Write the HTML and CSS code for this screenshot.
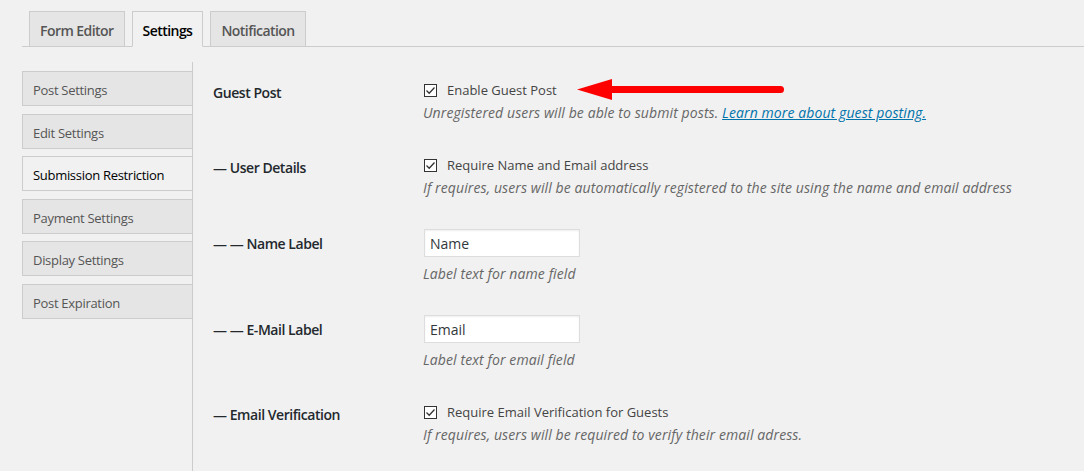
FILE: index.html
```html
<!DOCTYPE html>
<html lang="en">
<head>
  <meta charset="UTF-8">
  <title>Settings</title>
  <link rel="stylesheet" href="styles.css">
</head>
<body>
<div class="wrap">
  <div class="nav-tabs">
    <a href="#" class="nav-tab">Form Editor</a>
    <a href="#" class="nav-tab active">Settings</a>
    <a href="#" class="nav-tab">Notification</a>
  </div>

  <div class="settings">
    <ul class="side-menu">
      <li><a href="#">Post Settings</a></li>
      <li><a href="#">Edit Settings</a></li>
      <li class="active"><a href="#">Submission Restriction</a></li>
      <li><a href="#">Payment Settings</a></li>
      <li><a href="#">Display Settings</a></li>
      <li><a href="#">Post Expiration</a></li>
    </ul>

    <div class="panel">
      <div class="row">
        <div class="row-label">Guest Post</div>
        <div class="row-field">
          <label class="check">
            <span class="box"><svg width="11" height="11" viewBox="0 0 11 11"><path d="M1.5 5.5 L4.2 8.2 L9.5 2.5" fill="none" stroke="#333" stroke-width="1.3"/></svg></span>
            Enable Guest Post
          </label>
          <p class="description">Unregistered users will be able to submit posts. <a href="#">Learn more about guest posting.</a></p>
        </div>
      </div>

      <div class="row">
        <div class="row-label">&mdash; User Details</div>
        <div class="row-field">
          <label class="check">
            <span class="box"><svg width="11" height="11" viewBox="0 0 11 11"><path d="M1.5 5.5 L4.2 8.2 L9.5 2.5" fill="none" stroke="#333" stroke-width="1.3"/></svg></span>
            Require Name and Email address
          </label>
          <p class="description">If requires, users will be automatically registered to the site using the name and email address</p>
        </div>
      </div>

      <div class="row row-input">
        <div class="row-label">&mdash; &mdash; Name Label</div>
        <div class="row-field">
          <input type="text" class="text-input" value="Name">
          <p class="description">Label text for name field</p>
        </div>
      </div>

      <div class="row row-input">
        <div class="row-label">&mdash; &mdash; E-Mail Label</div>
        <div class="row-field">
          <input type="text" class="text-input" value="Email">
          <p class="description">Label text for email field</p>
        </div>
      </div>

      <div class="row">
        <div class="row-label">&mdash; Email Verification</div>
        <div class="row-field">
          <label class="check">
            <span class="box"><svg width="11" height="11" viewBox="0 0 11 11"><path d="M1.5 5.5 L4.2 8.2 L9.5 2.5" fill="none" stroke="#333" stroke-width="1.3"/></svg></span>
            Require Email Verification for Guests
          </label>
          <p class="description">If requires, users will be required to verify their email adress.</p>
        </div>
      </div>
    </div>
  </div>

  <!-- annotation arrow -->
  <svg class="arrow" width="220" height="32" viewBox="0 0 220 32">
    <line x1="40" y1="15.5" x2="210.5" y2="15.5" stroke="#ff0000" stroke-width="7" stroke-linecap="round"/>
    <polygon points="7,15.5 42,5 42,26" fill="#ff0000"/>
  </svg>
</div>
</body>
</html>
```

FILE: styles.css
```css
* {
  margin: 0;
  padding: 0;
  box-sizing: border-box;
}

body {
  background: #f1f1f1;
  font-family: "Open Sans", "Noto Sans", sans-serif;
  font-size: 13px;
  color: #444;
  height: 471px;
  overflow: hidden;
}

a {
  text-decoration: none;
}

.wrap {
  position: relative;
  padding-top: 11px;
}

.nav-tabs {
  display: flex;
  align-items: flex-end;
  margin-left: 22px;
  border-bottom: 1px solid #ccc;
}

.nav-tab {
  margin-left: 7px;
  padding: 7px 10px 3px;
  line-height: 24px;
  font-size: 14px;
  font-weight: 600;
  letter-spacing: -0.55px;
  color: #555;
  background: #e5e5e5;
  border: 1px solid #ccc;
  border-bottom: none;
}

.nav-tab.active {
  color: #000;
  background: #f1f1f1;
  border-bottom: 1px solid #f1f1f1;
  margin-bottom: -1px;
}

.settings {
  display: flex;
  margin-left: 22px;
  margin-top: 15px;
}

.side-menu {
  list-style: none;
  width: 171px;
  min-height: 420px;
  padding-top: 9px;
  border-right: 1px solid #ccc;
}

.side-menu li {
  height: 35px;
  margin-bottom: 7.6px;
  background: #e5e5e5;
  border: 1px solid #ccc;
  border-right: none;
}

.side-menu li a {
  display: block;
  padding: 4px 0 0 10px;
  line-height: 29px;
  font-size: 13px;
  letter-spacing: -0.3px;
  color: #555;
}

.side-menu li.active {
  background: #f1f1f1;
}

.side-menu li.active a {
  color: #000;
}

.panel {
  padding-left: 20px;
  padding-top: 2px;
}

.row {
  display: flex;
  padding: 16px 0 16px;
}

.row-input {
  padding-top: 15px;
}

.row-label {
  width: 210px;
  padding-top: 3px;
  font-size: 14px;
  font-weight: 600;
  letter-spacing: -0.45px;
  line-height: 20px;
  color: #23282d;
}

.row-input .row-label {
  padding-top: 5px;
}

.check {
  display: flex;
  align-items: center;
  height: 20px;
  color: #444;
}

.box {
  display: flex;
  align-items: center;
  justify-content: center;
  width: 13px;
  height: 13px;
  margin-left: 1px;
  margin-right: 10px;
  background: #fff;
  border: 1px solid #333;
}

.description {
  margin-top: 3px;
  line-height: 20px;
  font-size: 14px;
  letter-spacing: 0.1px;
  font-style: italic;
  color: #666;
}

.description a {
  color: #0073aa;
  text-decoration: underline;
}

.text-input {
  display: block;
  width: 156px;
  height: 28px;
  margin-left: 1px;
  padding: 0 5px;
  font-family: inherit;
  font-size: 14px;
  color: #32373c;
  background: #fff;
  border: 1px solid #ddd;
  box-shadow: inset 0 1px 2px rgba(0, 0, 0, 0.07);
  outline: none;
}

.row-input .description {
  margin-top: 7px;
}

.arrow {
  position: absolute;
  left: 570px;
  top: 74px;
}
```
